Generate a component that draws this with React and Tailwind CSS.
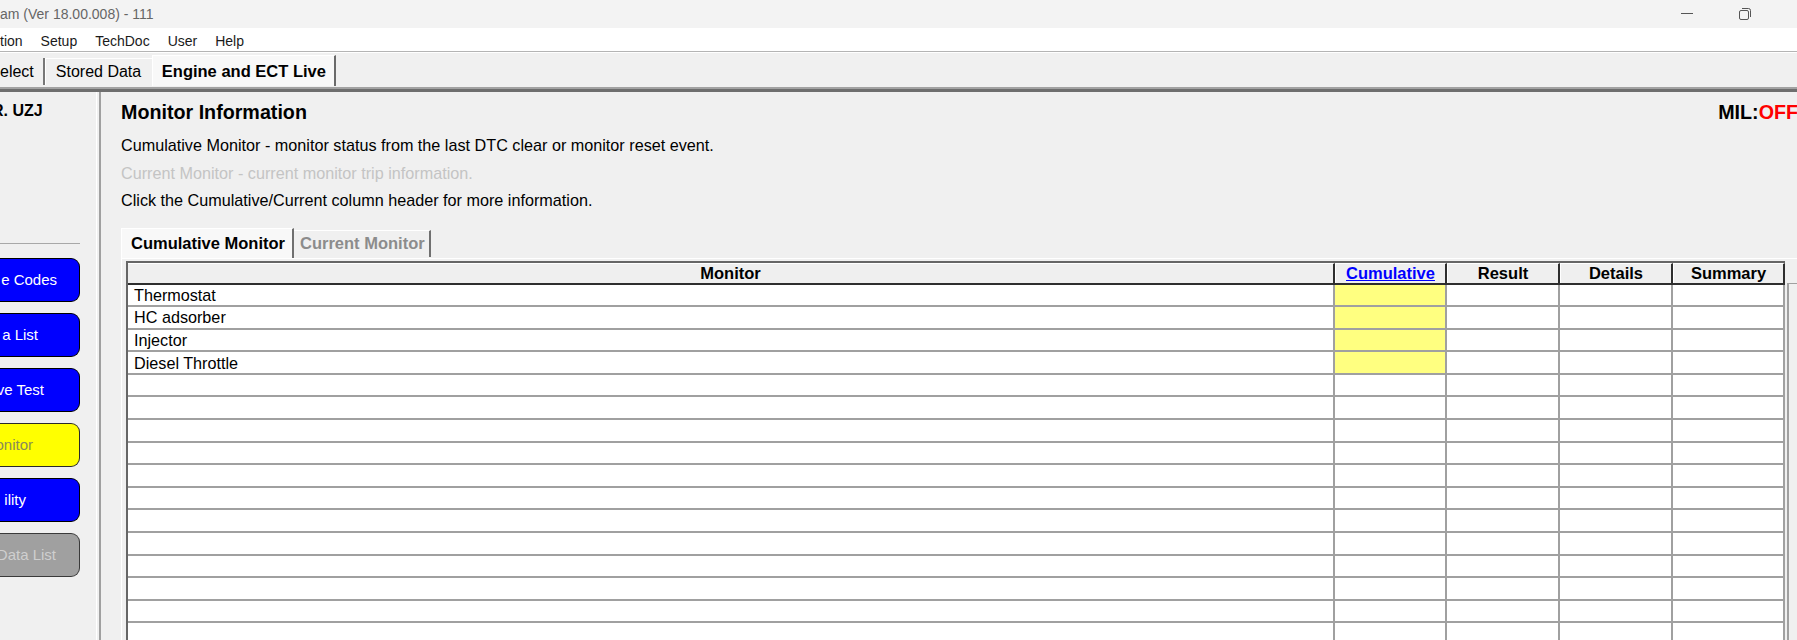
import React from 'react'

const sideButtons = [
  { label: 'e Codes', cls: 'bg-[#0000ff] text-white border-black pr-[22px]' },
  { label: 'a List', cls: 'bg-[#0000ff] text-white border-black pr-[41px]' },
  { label: 've Test', cls: 'bg-[#0000ff] text-white border-black pr-[35px]' },
  { label: 'onitor', cls: 'bg-[#ffff00] text-[#8a8a5a] border-[#2a2a2a] pr-[46px]' },
  { label: 'ility', cls: 'bg-[#0000ff] text-white border-black pr-[53px]' },
  { label: 'Data List', cls: 'bg-[#a0a0a0] text-[#cfcfcf] border-[#3a3a3a] pr-[23px]' },
]

const monitors = ['Thermostat', 'HC adsorber', 'Injector', 'Diesel Throttle']

const rows = Array.from({ length: 17 }, (_, i) => monitors[i] || '')

function TitleBar() {
  return (
    <div className="h-[28px] shrink-0 bg-[#f3f3f3] flex items-center">
      <span className="text-[14px] text-[#666] whitespace-nowrap">am (Ver 18.00.008) - 111</span>
      <div className="ml-auto flex h-full mr-[-35px]">
        <div className="w-[58px] h-full flex items-center justify-center">
          <div className="w-[12px] h-px bg-[#555] -mt-[2px]" />
        </div>
        <div className="w-[58px] h-full flex items-center justify-center">
          <svg width="15" height="14" viewBox="0 0 15 14" fill="none" stroke="#555" strokeWidth="1" className="-mt-[1px]">
            <rect x="1.5" y="3.5" width="9" height="9" rx="1.5" />
            <path d="M4 1.5h6.5a2 2 0 0 1 2 2V10" />
          </svg>
        </div>
        <div className="w-[58px] h-full" />
      </div>
    </div>
  )
}

function MenuBar() {
  return (
    <div className="h-[24px] shrink-0 bg-white flex items-center pt-[3px] gap-[18px] text-[14px] text-[#1a1a1a] border-b border-[#b4b4b4]">
      <span>tion</span>
      <span>Setup</span>
      <span>TechDoc</span>
      <span>User</span>
      <span>Help</span>
    </div>
  )
}

function TopTabs() {
  return (
    <div className="h-[35px] shrink-0 bg-[#f0f0f0] border-t border-white flex items-end text-[16px]">
      <div className="h-[27px] flex items-center pr-[9px] border-r-2 border-[#777] mb-[2px]">
        <span>elect</span>
      </div>
      <div className="h-[27px] w-[107px] flex items-center pl-[10px] border-l border-white border-t mb-[2px]">
        <span>Stored Data</span>
      </div>
      <div className="h-[31px] w-[184px] flex items-center pl-[9px] bg-[#f8f8f8] border-l border-t border-white border-r-2 border-r-[#6a6a6a] mb-[1px]">
        <span className="font-bold text-[16.5px]">Engine and ECT Live</span>
      </div>
    </div>
  )
}

function SidePanel() {
  return (
    <div className="w-[97px] shrink-0 border-r border-white pt-[9px] overflow-hidden">
      <div className="h-[20px] leading-[20px] text-[16px] font-bold whitespace-nowrap -ml-[8px]">R. UZJ</div>
      <div className="mt-[122px] w-[80px] h-px bg-[#a8a8a8]" />
      <div className="mt-[14px] flex flex-col gap-[11px]">
        {sideButtons.map((b) => (
          <div
            key={b.label}
            className={`w-[80px] h-[44px] rounded-r-[9px] border border-l-0 flex items-center justify-end text-[15px] leading-[20px] whitespace-nowrap ${b.cls}`}
          >
            {b.label}
          </div>
        ))}
      </div>
    </div>
  )
}

function MonitorTable() {
  return (
    <div className="flex">
      <div className="w-[1659px] border-l-2 border-t-2 border-[#666]">
        {/* header */}
        <div className="grid grid-cols-[1207px_112px_113px_113px_112px] grid-rows-[100%] h-[22px] border-b-2 border-[#2e2e2e] bg-[#efefef] text-[16.5px] leading-[18px] font-bold">
          <div className="border-r-2 border-[#2e2e2e] border-t border-t-white flex items-center justify-center">Monitor</div>
          <div className="border-r-2 border-[#2e2e2e] border-l border-l-white border-t border-t-white flex items-center justify-center">
            <span className="text-[#0000ff] underline">Cumulative</span>
          </div>
          <div className="border-r-2 border-[#2e2e2e] border-l border-l-white border-t border-t-white flex items-center justify-center">Result</div>
          <div className="border-r-2 border-[#2e2e2e] border-l border-l-white border-t border-t-white flex items-center justify-center">Details</div>
          <div className="border-r-2 border-[#2e2e2e] border-l border-l-white border-t border-t-white flex items-center justify-center">Summary</div>
        </div>
        {/* rows */}
        {rows.map((name, i) => (
          <div
            key={i}
            className="grid grid-cols-[1207px_112px_113px_113px_112px] grid-rows-[100%] h-[22.6px] border-b-2 border-[#a0a0a0] bg-white text-[16.2px] leading-[18px] overflow-hidden"
          >
            <div className="border-r-2 border-[#a0a0a0] flex items-center pl-[6px] whitespace-nowrap">{name}</div>
            <div className={`border-r-2 border-[#a0a0a0] ${name ? 'bg-[#ffff80]' : ''}`} />
            <div className="border-r-2 border-[#a0a0a0]" />
            <div className="border-r-2 border-[#a0a0a0]" />
            <div className="border-r-2 border-[#a0a0a0]" />
          </div>
        ))}
      </div>
      {/* vertical scrollbar */}
      <div className="w-[17px] shrink-0 pl-[2px] pt-[22px]">
        <div className="h-[400px] border-l-2 border-t border-[#a0a0a0] bg-[#f0f0f0]" />
      </div>
    </div>
  )
}

function MainPanel() {
  return (
    <div className="flex-1 min-w-0 border-l-2 border-[#a0a0a0] pl-[20px] pt-[8px]">
      <div className="h-[24px] flex items-center justify-between text-[19.7px] font-bold leading-[24px]">
        <span>Monitor Information</span>
        <span className="-mr-[1px]">
          MIL:<span className="text-[#ff0000]">OFF</span>
        </span>
      </div>
      <div className="mt-[8px] text-[16.2px] leading-[27.5px]">
        <div>Cumulative Monitor - monitor status from the last DTC clear or monitor reset event.</div>
        <div className="text-[#c4c4c4]">Current Monitor - current monitor trip information.</div>
        <div>Click the Cumulative/Current column header for more information.</div>
      </div>
      {/* monitor tabs */}
      <div className="mt-[13px] flex items-start text-[16.5px] font-bold">
        <div className="h-[30px] w-[173px] flex items-center pl-[9px] bg-[#f8f8f8] border-l border-t border-white border-r-2 border-r-[#707070]">
          Cumulative Monitor
        </div>
        <div className="mt-[2px] h-[27px] w-[137px] flex items-center pl-[6px] text-[#8c8c8c] border-t border-white border-r-2 border-r-[#707070]">
          Current Monitor
        </div>
      </div>
      <div className="border-l border-t border-white pl-[4px] pt-[2px]">
        <MonitorTable />
      </div>
    </div>
  )
}

export default function App() {
  return (
    <div className="w-[1797px] h-[640px] overflow-hidden bg-[#f0f0f0] flex flex-col text-black font-['Liberation_Sans',Arial,sans-serif]">
      <TitleBar />
      <MenuBar />
      <TopTabs />
      <div className="h-[5px] shrink-0 border-t-2 border-[#a2a2a2] bg-[#6e6e6e]" />
      <div className="flex-1 min-h-0 flex">
        <SidePanel />
        <div className="w-[2px] shrink-0" />
        <MainPanel />
      </div>
    </div>
  )
}
